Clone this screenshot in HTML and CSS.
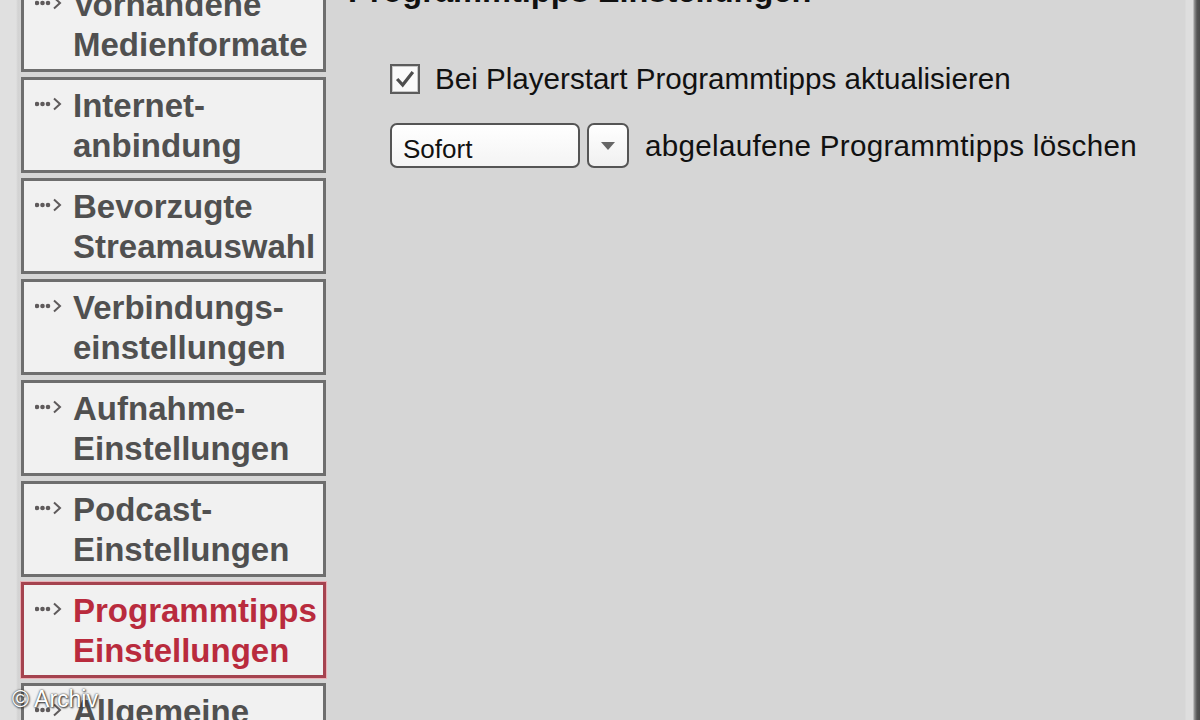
FILE: index.html
```html
<!DOCTYPE html>
<html lang="de">
<head>
<meta charset="utf-8">
<title>Programmtipps Einstellungen</title>
<link rel="stylesheet" href="styles.css">
</head>
<body>
<div class="app">
  <nav class="sidebar">
    <div class="nav-item"><svg class="arrow" viewBox="0 0 28 14"><circle cx="2" cy="7" r="1.3"/><circle cx="7.5" cy="7" r="1.3"/><circle cx="13" cy="7" r="1.3"/><polyline points="19,1.5 25,7 19,12.5"/></svg><span class="label">Vorhandene<br>Medienformate</span></div>
    <div class="nav-item"><svg class="arrow" viewBox="0 0 28 14"><circle cx="2" cy="7" r="1.3"/><circle cx="7.5" cy="7" r="1.3"/><circle cx="13" cy="7" r="1.3"/><polyline points="19,1.5 25,7 19,12.5"/></svg><span class="label">Internet-<br>anbindung</span></div>
    <div class="nav-item"><svg class="arrow" viewBox="0 0 28 14"><circle cx="2" cy="7" r="1.3"/><circle cx="7.5" cy="7" r="1.3"/><circle cx="13" cy="7" r="1.3"/><polyline points="19,1.5 25,7 19,12.5"/></svg><span class="label">Bevorzugte<br>Streamauswahl</span></div>
    <div class="nav-item"><svg class="arrow" viewBox="0 0 28 14"><circle cx="2" cy="7" r="1.3"/><circle cx="7.5" cy="7" r="1.3"/><circle cx="13" cy="7" r="1.3"/><polyline points="19,1.5 25,7 19,12.5"/></svg><span class="label">Verbindungs-<br>einstellungen</span></div>
    <div class="nav-item"><svg class="arrow" viewBox="0 0 28 14"><circle cx="2" cy="7" r="1.3"/><circle cx="7.5" cy="7" r="1.3"/><circle cx="13" cy="7" r="1.3"/><polyline points="19,1.5 25,7 19,12.5"/></svg><span class="label">Aufnahme-<br>Einstellungen</span></div>
    <div class="nav-item"><svg class="arrow" viewBox="0 0 28 14"><circle cx="2" cy="7" r="1.3"/><circle cx="7.5" cy="7" r="1.3"/><circle cx="13" cy="7" r="1.3"/><polyline points="19,1.5 25,7 19,12.5"/></svg><span class="label">Podcast-<br>Einstellungen</span></div>
    <div class="nav-item active"><svg class="arrow" viewBox="0 0 28 14"><circle cx="2" cy="7" r="1.3"/><circle cx="7.5" cy="7" r="1.3"/><circle cx="13" cy="7" r="1.3"/><polyline points="19,1.5 25,7 19,12.5"/></svg><span class="label">Programmtipps<br>Einstellungen</span></div>
    <div class="nav-item"><svg class="arrow" viewBox="0 0 28 14"><circle cx="2" cy="7" r="1.3"/><circle cx="7.5" cy="7" r="1.3"/><circle cx="13" cy="7" r="1.3"/><polyline points="19,1.5 25,7 19,12.5"/></svg><span class="label">Allgemeine<br>Einstellungen</span></div>
  </nav>
  <main class="content">
    <h1 class="title">Programmtipps Einstellungen</h1>
    <div class="row check-row">
      <span class="checkbox"><svg viewBox="0 0 26 26"><polyline points="4.5,13 10.5,19.5 21.5,5.5"/></svg></span>
      <span class="text">Bei Playerstart Programmtipps aktualisieren</span>
    </div>
    <div class="row select-row">
      <span class="select">Sofort</span>
      <span class="drop"><svg viewBox="0 0 14 8"><polygon points="0,0 14,0 7,8"/></svg></span>
      <span class="text wide">abgelaufene Programmtipps löschen</span>
    </div>
  </main>
  <div class="edge"></div>
</div>
<div class="copyright">© Archiv</div>
</body>
</html>
```
FILE: styles.css
```css
html, body {
  margin: 0;
  padding: 0;
  width: 1200px;
  height: 720px;
  overflow: hidden;
  background: #d6d6d6;
}

.app {
  display: flex;
  height: 720px;
  overflow: hidden;
  font-family: "Liberation Sans", Arial, sans-serif;
}

.sidebar {
  width: 327px;
  flex: none;
  box-sizing: border-box;
  padding-left: 21px;
  margin-top: -24px;
  display: flex;
  flex-direction: column;
  gap: 5px;
  background: linear-gradient(to right, #e0e0e0 0, #e0e0e0 16px, #d2d2d2 18px, #d6d6d6 21px);
}

.nav-item {
  box-sizing: border-box;
  width: 305px;
  height: 96px;
  flex: none;
  border: 3px solid #6e6e6e;
  background: #f1f1f1;
  display: flex;
  align-items: flex-start;
  padding: 6px 0 0 11px;
  gap: 10px;
  color: #505050;
}

.nav-item.active {
  border-color: #a5434f;
  box-shadow: 0 0 0 1px #e9b1b7;
  color: #b92b3d;
}

.arrow {
  width: 28px;
  height: 14px;
  flex: none;
  margin-top: 11px;
  fill: #8a6c72;
  stroke: #5e5a5b;
  stroke-width: 2;
}

.arrow polyline {
  fill: none;
}

.label {
  font-weight: bold;
  font-size: 33px;
  line-height: 40px;
  white-space: nowrap;
}

.content {
  flex: 1;
  padding-left: 21px;
  color: #111111;
}

.title {
  margin: -29px 0 0 0;
  font-size: 32.6px;
  line-height: 40px;
  font-weight: bold;
  white-space: nowrap;
}

.row {
  display: flex;
  align-items: center;
  margin-left: 42px;
}

.check-row {
  margin-top: 48px;
  height: 40px;
}

.select-row {
  margin-top: 24px;
  height: 45px;
}

.text {
  font-size: 29.6px;
  line-height: 40px;
  white-space: nowrap;
}

.text.wide {
  letter-spacing: 0.3px;
}

.checkbox {
  box-sizing: border-box;
  width: 30px;
  height: 30px;
  border: 2px solid #5c5c5c;
  box-shadow: inset 0 0 0 1px #c8c8c8;
  background: #fafafa;
  display: flex;
  align-items: center;
  justify-content: center;
  margin-right: 15px;
}

.checkbox svg {
  width: 24px;
  height: 24px;
  fill: none;
  stroke: #4e4e4e;
  stroke-width: 3.5;
}

.select {
  box-sizing: border-box;
  width: 190px;
  height: 45px;
  border: 2px solid #555555;
  border-radius: 7px;
  background: linear-gradient(#ffffff, #f4f4f4);
  font-size: 26px;
  line-height: 41px;
  padding: 4px 0 0 11px;
  margin-right: 7px;
}

.drop {
  box-sizing: border-box;
  width: 42px;
  height: 45px;
  border: 2px solid #555555;
  border-radius: 7px;
  background: linear-gradient(#ffffff, #f0f0f0);
  display: flex;
  align-items: center;
  justify-content: center;
  margin-right: 16px;
}

.drop svg {
  width: 14px;
  height: 8px;
  fill: #666666;
}

.edge {
  width: 15px;
  flex: none;
  background: linear-gradient(to right, #d6d6d6 0, #dedede 1px, #dedede 8px, #9a9a9a 9px, #555555 12px, #4a4a4a 15px);
}

.copyright {
  position: absolute;
  left: 12px;
  top: 685px;
  font-family: "Liberation Sans", Arial, sans-serif;
  font-size: 23px;
  line-height: 28px;
  color: #ffffff;
  text-shadow: 0 0 2px #222222, 1px 1px 2px #333333;
}
```
